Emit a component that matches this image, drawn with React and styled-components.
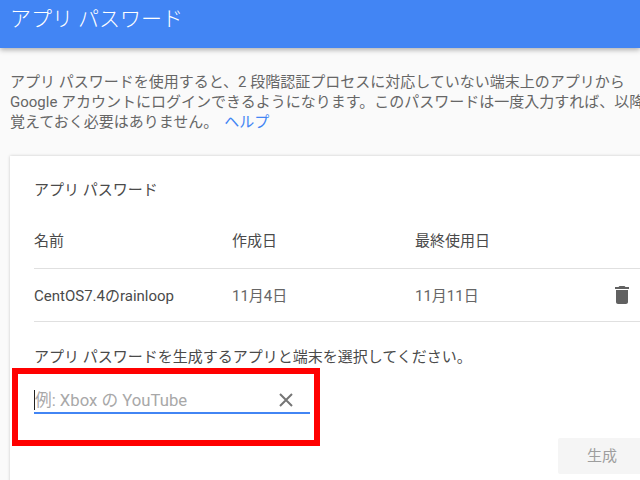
import React from 'react'
import styled, { createGlobalStyle } from 'styled-components'

const GlobalStyle = createGlobalStyle`
html, body {
  margin: 0;
  padding: 0;
  width: 640px;
  height: 480px;
  overflow: hidden;
  background: #fafafa;
  font-family: Roboto, "Noto Sans CJK JP", sans-serif;
}
`;

const Page = styled.div`
position: relative;
width: 640px;
height: 480px;
overflow: hidden;
`;

const Header = styled.div`
height: 48px;
background: #4285f4;
box-shadow: 0 2px 5px rgba(0,0,0,.3);
padding-left: 10px;
color: #fff;
font-size: 21px;
line-height: 38px;
font-weight: 300;
white-space: nowrap;
`;

const Intro = styled.div`
padding: 24px 0 0 10px;
height: 84px;
font-size: 15px;
line-height: 20px;
color: #666;
white-space: nowrap;
`;

const HelpLink = styled.a`
color: #4285f4;
margin-left: 6px;
`;

const Card = styled.div`
margin-left: 10px;
width: 700px;
height: 340px;
padding: 24px 0 0 24px;
box-sizing: border-box;
background: #fff;
box-shadow: 0 0 3px rgba(0,0,0,.2);
`;

const CardTitle = styled.div`
font-size: 15px;
line-height: 20px;
color: #4a4a4a;
`;

const Row = styled.div`
display: grid;
grid-template-columns: 198px 183px 195px 1fr;
align-items: center;
height: ${p => p.$h}px;
padding-top: ${p => p.$top || 0}px;
box-sizing: border-box;
border-bottom: 1px solid #e0e0e0;
font-size: 15px;
`;

const HeadCell = styled.div`
color: #4a4a4a;
`;

const Cell = styled.div`
padding-bottom: 2px;
color: ${p => p.$muted ? '#666' : '#4a4a4a'};
`;

const TrashIcon = styled.svg`
width: 24px;
height: 24px;
fill: #616161;
display: block;
`;

const Prompt = styled.div`
margin-top: 25px;
font-size: 15px;
line-height: 20px;
color: #4a4a4a;
`;

const InputRow = styled.div`
display: flex;
align-items: center;
justify-content: space-between;
width: 276px;
height: 24px;
padding-top: 6px;
margin-top: 15px;
border-bottom: 2px solid #4285f4;
`;

const Placeholder = styled.div`
border-left: 1px solid #212121;
height: 20px;
font-size: 16.7px;
line-height: 22px;
color: #a8a8a8;
white-space: nowrap;
`;

const ClearIcon = styled.svg`
width: 24px;
height: 24px;
margin-right: 12px;
stroke: #757575;
stroke-width: 2;
fill: none;
display: block;
`;

const Actions = styled.div`
margin-top: 24px;
padding-left: 524px;
`;

const GenerateButton = styled.div`
width: 120px;
height: 36px;
border-radius: 2px;
background: #f5f5f5;
color: #9e9e9e;
font-size: 15px;
line-height: 36px;
padding-left: 29px;
box-sizing: border-box;
`;

const Highlight = styled.div`
position: absolute;
left: 12px;
top: 368px;
width: 308px;
height: 78px;
box-sizing: border-box;
border: 6px solid #ff0000;
`;

const App = () => {
    return (
        <Page>
            <GlobalStyle />
            <Header>アプリ パスワード</Header>
            <Intro>
                アプリ パスワードを使用すると、2 段階認証プロセスに対応していない端末上のアプリから<br />
                Google アカウントにログインできるようになります。このパスワードは一度入力すれば、以降は<br />
                覚えておく必要はありません。<HelpLink>ヘルプ</HelpLink>
            </Intro>
            <Card>
                <CardTitle>アプリ パスワード</CardTitle>
                <Row $h={69} $top={11}>
                    <HeadCell>名前</HeadCell>
                    <HeadCell>作成日</HeadCell>
                    <HeadCell>最終使用日</HeadCell>
                </Row>
                <Row $h={53}>
                    <Cell>CentOS7.4のrainloop</Cell>
                    <Cell $muted>11月4日</Cell>
                    <Cell $muted>11月11日</Cell>
                    <TrashIcon viewBox="0 0 24 24">
                        <path d="M6 19c0 1.1.9 2 2 2h8c1.1 0 2-.9 2-2V7H6v12zM19 4h-3.5l-1-1h-5l-1 1H5v2h14V4z" />
                    </TrashIcon>
                </Row>
                <Prompt>アプリ パスワードを生成するアプリと端末を選択してください。</Prompt>
                <InputRow>
                    <Placeholder>例: Xbox の YouTube</Placeholder>
                    <ClearIcon viewBox="0 0 24 24">
                        <path d="M6 6l12 12M18 6L6 18" />
                    </ClearIcon>
                </InputRow>
                <Actions>
                    <GenerateButton>生成</GenerateButton>
                </Actions>
            </Card>
            <Highlight />
        </Page>
    );
}

export default App;
